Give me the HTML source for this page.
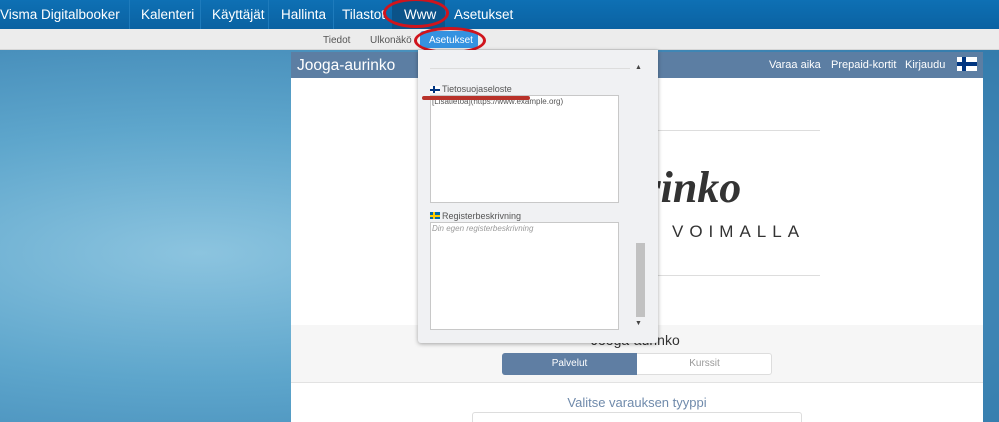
<!DOCTYPE html>
<html><head><meta charset="utf-8"><style>
*{margin:0;padding:0;box-sizing:border-box}
html,body{width:999px;height:422px;overflow:hidden}
body{position:relative;font-family:"Liberation Sans",sans-serif;
background:radial-gradient(ellipse at 20% 60%,#8cc4df 0%,#5ea6cc 35%,#3f86b5 70%,#2f77a8 100%);}
.top{position:absolute;left:0;top:0;width:999px;height:29px;background:linear-gradient(#0e70b4,#0a62a2);color:#fff;font-size:13.5px}
.top span{position:absolute;top:7px}
.sep{position:absolute;top:0;width:1px;height:29px;background:#1e7bbc}
.sub{position:absolute;left:0;top:29px;width:999px;height:21px;background:#ececec;border-bottom:1px solid #d6d6d6;font-size:10px;color:#555}
.sub span{position:absolute;top:6px}
.panel{position:absolute;left:291px;top:52px;width:692px;height:370px;background:#fff;overflow:hidden}
.ph{position:absolute;left:0;top:0;width:692px;height:26px;background:#5c7ea3;color:#fff}
.dd{position:absolute;left:418px;top:50px;width:240px;height:293px;background:#f0f1f3;box-shadow:0 1px 4px rgba(0,0,0,.35);border-radius:0 0 3px 3px}
.ta{position:absolute;background:#fff;border:1px solid #c8c8c8}
.lbl{position:absolute;font-size:9px;color:#555}
</style></head><body>
<div class="top">
<span style="left:0">Visma Digitalbooker</span>
<div class="sep" style="left:129px"></div><span style="left:141px">Kalenteri</span>
<div class="sep" style="left:200px"></div><span style="left:212px">Käyttäjät</span>
<div class="sep" style="left:268px"></div><span style="left:281px">Hallinta</span>
<div class="sep" style="left:333px"></div><span style="left:342px">Tilastot</span>
<div style="position:absolute;left:392px;top:0;width:53px;height:29px;background:#0b5389"></div>
<span style="left:404px">Www</span>
<span style="left:454px">Asetukset</span>
</div>
<div style="position:absolute;left:383px;top:-2px;width:66px;height:30px;border:3px solid #d0141c;border-radius:50%"></div>
<div class="sub">
<span style="left:323px">Tiedot</span><span style="left:370px">Ulkonäkö</span>
<div style="position:absolute;left:420px;top:2px;width:58px;height:17px;background:#3592e0;border-radius:3px"></div>
<span style="left:429px;color:#fff">Asetukset</span>
</div>
<div style="position:absolute;left:414px;top:27px;width:72px;height:27px;border:3px solid #d0141c;border-radius:50%"></div>
<div class="panel">
<div class="ph"><span style="position:absolute;left:6px;top:5px;font-size:15.5px">Jooga-aurinko</span>
<span style="position:absolute;left:478px;top:7px;font-size:11px">Varaa aika</span>
<span style="position:absolute;left:540px;top:7px;font-size:11px">Prepaid-kortit</span>
<span style="position:absolute;left:614px;top:7px;font-size:11px">Kirjaudu</span>
<div style="position:absolute;left:666px;top:5px;width:20px;height:14px;background:#fff"><div style="position:absolute;left:5px;top:0;width:4px;height:14px;background:#003580"></div><div style="position:absolute;left:0;top:5px;width:20px;height:4px;background:#003580"></div></div>
</div>
<div style="position:absolute;left:309px;top:78px;width:220px;height:1px;background:#ddd"></div>
<div style="position:absolute;left:309px;top:223px;width:220px;height:1px;background:#ddd"></div>
<div style="position:absolute;left:262px;top:110px;font-family:'Liberation Serif',serif;font-style:italic;font-weight:bold;font-size:44px;color:#333">a-Aurinko</div>
<div style="position:absolute;left:381px;top:170px;font-size:17px;letter-spacing:6px;color:#333">VOIMALLA</div>
<div style="position:absolute;left:0;top:273px;width:692px;height:58px;background:#f6f6f6;border-bottom:1px solid #e2e2e2"></div>
<div style="position:absolute;left:300px;top:280px;font-size:14px;color:#333">Jooga-aurinko</div>
<div style="position:absolute;left:211px;top:301px;width:270px;height:22px;border:1px solid #ddd;border-radius:3px;background:#fff"></div>
<div style="position:absolute;left:211px;top:301px;width:135px;height:22px;background:#5f7ea3;border-radius:3px 0 0 3px;color:#fff;font-size:10px;text-align:center;line-height:22px">Palvelut</div>
<div style="position:absolute;left:346px;top:301px;width:135px;height:22px;color:#999;font-size:10px;text-align:center;line-height:22px">Kurssit</div>
<div style="position:absolute;left:0;top:343px;width:692px;text-align:center;font-size:13px;color:#6f8aab">Valitse varauksen tyyppi</div>
<div style="position:absolute;left:181px;top:360px;width:330px;height:20px;border:1px solid #ddd;border-radius:3px"></div>
</div>
<div class="dd">
<div style="position:absolute;left:12px;top:18px;width:200px;height:1px;background:#ddd"></div>
<div style="position:absolute;left:217px;top:14px;font-size:7px;color:#444">▲</div>
<div style="position:absolute;left:218px;top:193px;width:9px;height:74px;background:#c1c1c1"></div>
<div style="position:absolute;left:217px;top:270px;font-size:7px;color:#444">▼</div>
<div style="position:absolute;left:12px;top:36px;width:10px;height:7px;background:#fff"><div style="position:absolute;left:3px;width:2px;height:7px;background:#003580"></div><div style="position:absolute;top:3px;width:10px;height:2px;background:#003580"></div></div>
<div class="lbl" style="left:24px;top:34px">Tietosuojaseloste</div>
<div class="ta" style="left:12px;top:45px;width:189px;height:108px"><div style="font-size:8px;color:#555;padding:1px 0 0 1px">[Lisätietoa](https://www.example.org)</div></div>
<div style="position:absolute;left:4px;top:46px;width:108px;height:4px;background:#b8322a;border-radius:2px"></div>
<div style="position:absolute;left:12px;top:162px;width:10px;height:7px;background:#006aa7"><div style="position:absolute;left:3px;width:2px;height:7px;background:#fecc00"></div><div style="position:absolute;top:3px;width:10px;height:2px;background:#fecc00"></div></div>
<div class="lbl" style="left:24px;top:161px">Registerbeskrivning</div>
<div class="ta" style="left:12px;top:172px;width:189px;height:108px"><div style="font-size:8px;color:#999;font-style:italic;padding:1px 0 0 1px">Din egen registerbeskrivning</div></div>
</div>
</body></html>
